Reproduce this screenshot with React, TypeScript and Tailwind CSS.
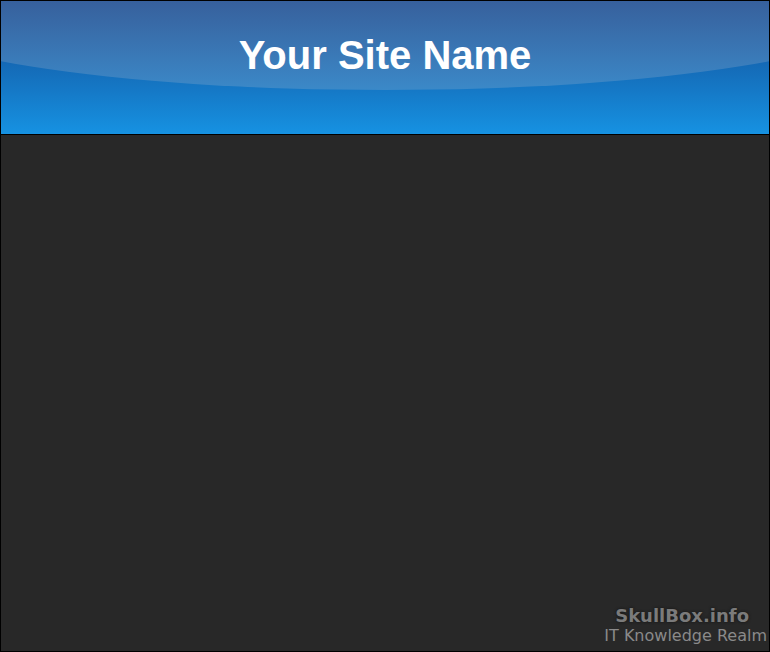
export default function App() {
  return (
    <div className="flex h-[652px] w-[770px] flex-col border border-black bg-[#282828]">
      <header className="relative flex h-[134px] shrink-0 items-start justify-center overflow-hidden border-b border-black bg-gradient-to-b from-[#124790] to-[#1692e2]">
        {/* gloss */}
        <div className="absolute left-[-116px] top-[-71px] h-[160px] w-[1000px] rounded-[50%] bg-gradient-to-b from-[#30417b] to-[#3b89c8]" />
        <h1 className="relative mt-[28px] font-['Liberation_Sans',Arial,sans-serif] text-[40px] font-bold leading-[52px] text-white">
          Your Site Name
        </h1>
      </header>

      <main className="flex flex-1 flex-col items-end justify-end pb-[6px] pr-[2px]">
        <div className="flex flex-col items-end font-['DejaVu_Sans',Verdana,sans-serif]">
          <span className="mr-[18px] text-[18px] font-bold leading-[22px] text-[#7b7b7b] [text-shadow:0_0_3px_#111]">
            SkullBox.info
          </span>
          <span className="text-[16px] leading-[18px] text-[#8a8a8a]">IT Knowledge Realm</span>
        </div>
      </main>
    </div>
  );
}
